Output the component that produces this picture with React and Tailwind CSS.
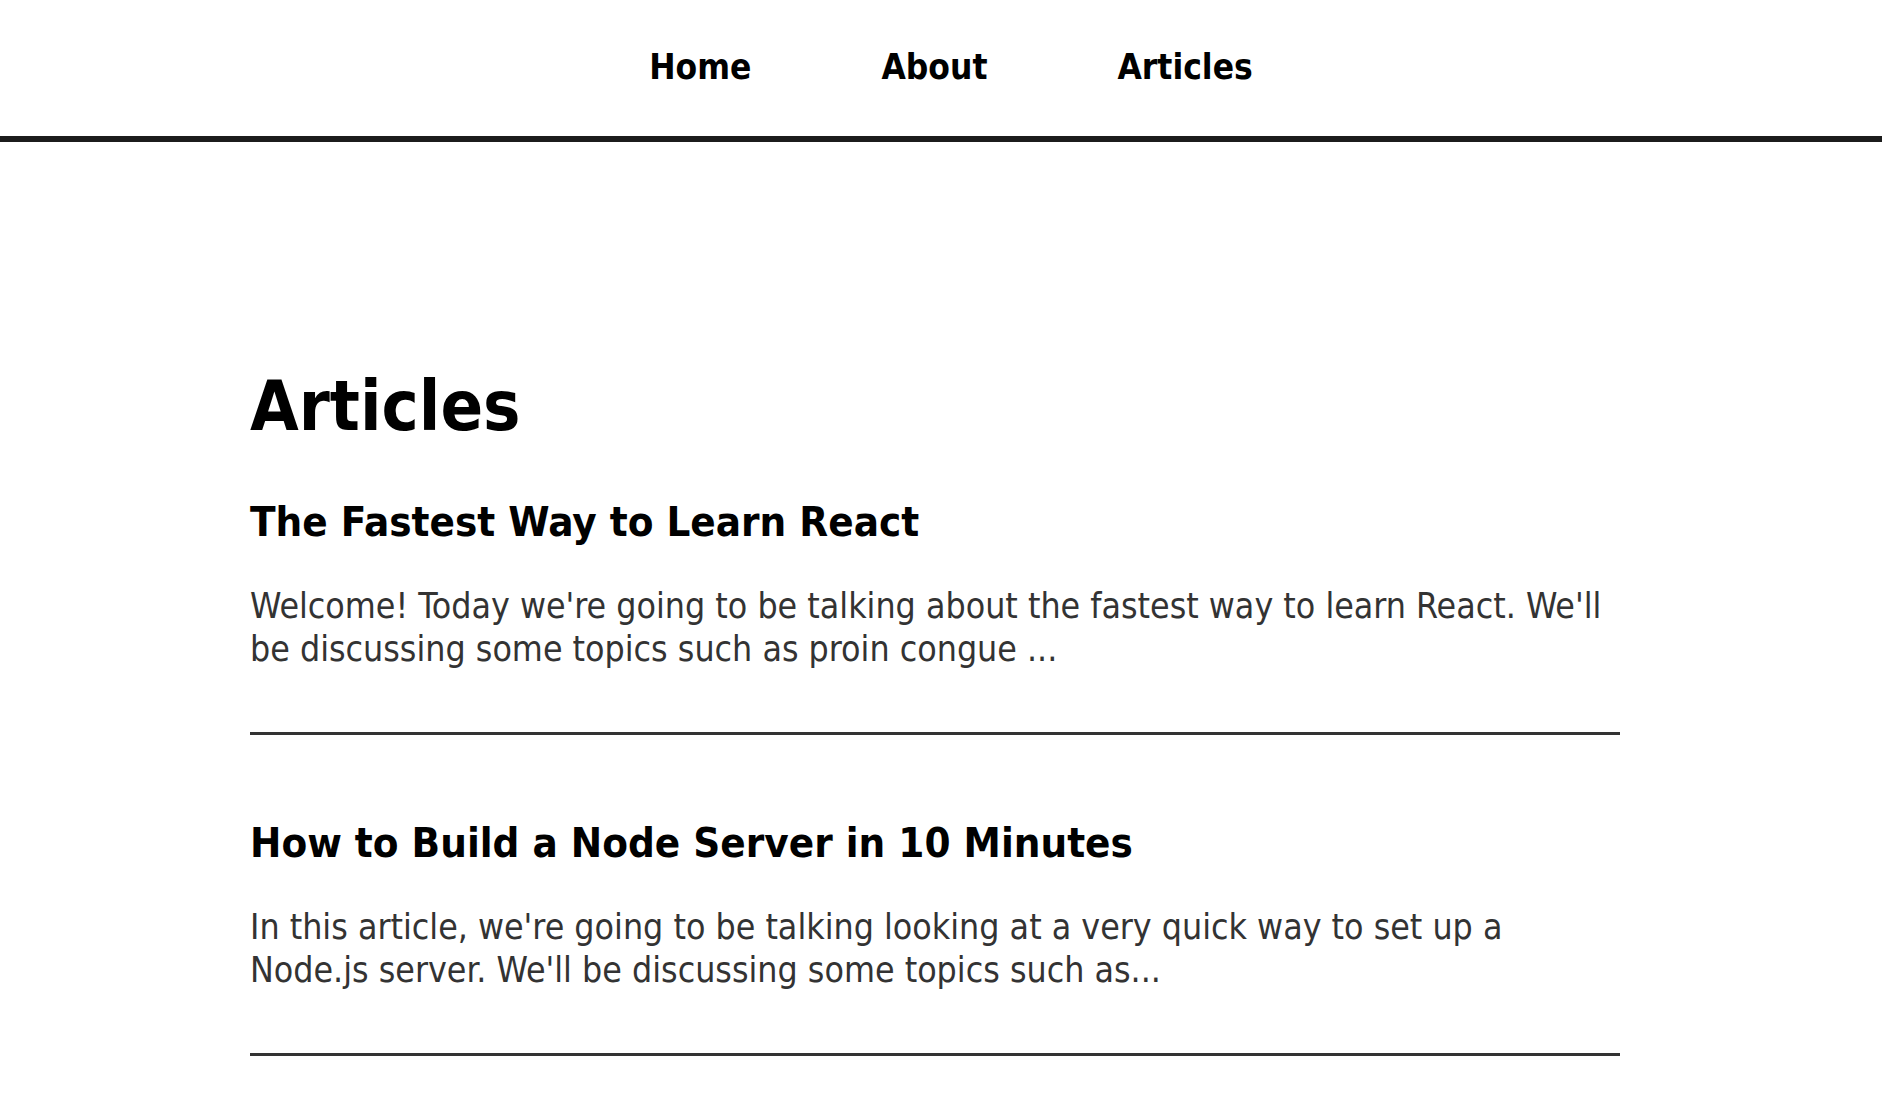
import React from 'react';

const articles = [
  {
    title: 'The Fastest Way to Learn React',
    excerpt:
      "Welcome! Today we're going to be talking about the fastest way to learn React. We'll be discussing some topics such as proin congue ...",
  },
  {
    title: 'How to Build a Node Server in 10 Minutes',
    excerpt:
      "In this article, we're going to be talking looking at a very quick way to set up a Node.js server. We'll be discussing some topics such as...",
  },
];

function NavBar() {
  return (
    <nav className="h-[142px] pb-[2px] border-b-[6px] border-[#1c1c1c] flex items-center justify-center gap-[130px] pl-[20px]">
      <a href="#" className="text-[35px] font-bold text-black">Home</a>
      <a href="#" className="text-[35px] font-bold text-black">About</a>
      <a href="#" className="text-[35px] font-bold text-black">Articles</a>
    </nav>
  );
}

export default function App() {
  return (
    <div
      className="min-h-screen bg-white text-black"
      style={{ fontFamily: '"DejaVu Sans Condensed", "DejaVu Sans", sans-serif' }}
    >
      <NavBar />
      <main className="pl-[250px] pt-[229px]">
        <div className="w-[1370px]">
          <h1 className="text-[70px] font-bold leading-none">Articles</h1>
          <div>
            {articles.map((a) => (
              <div key={a.title} className="border-b-[3px] border-[#333] pt-[82px] first:pt-[55px] pb-[62px]">
                <h3 className="text-[41.7px] font-bold leading-tight">{a.title}</h3>
                <p className="w-[1362px] mt-[36px] text-[35.4px] leading-[43px] text-[#333]">{a.excerpt}</p>
              </div>
            ))}
          </div>
        </div>
      </main>
    </div>
  );
}
